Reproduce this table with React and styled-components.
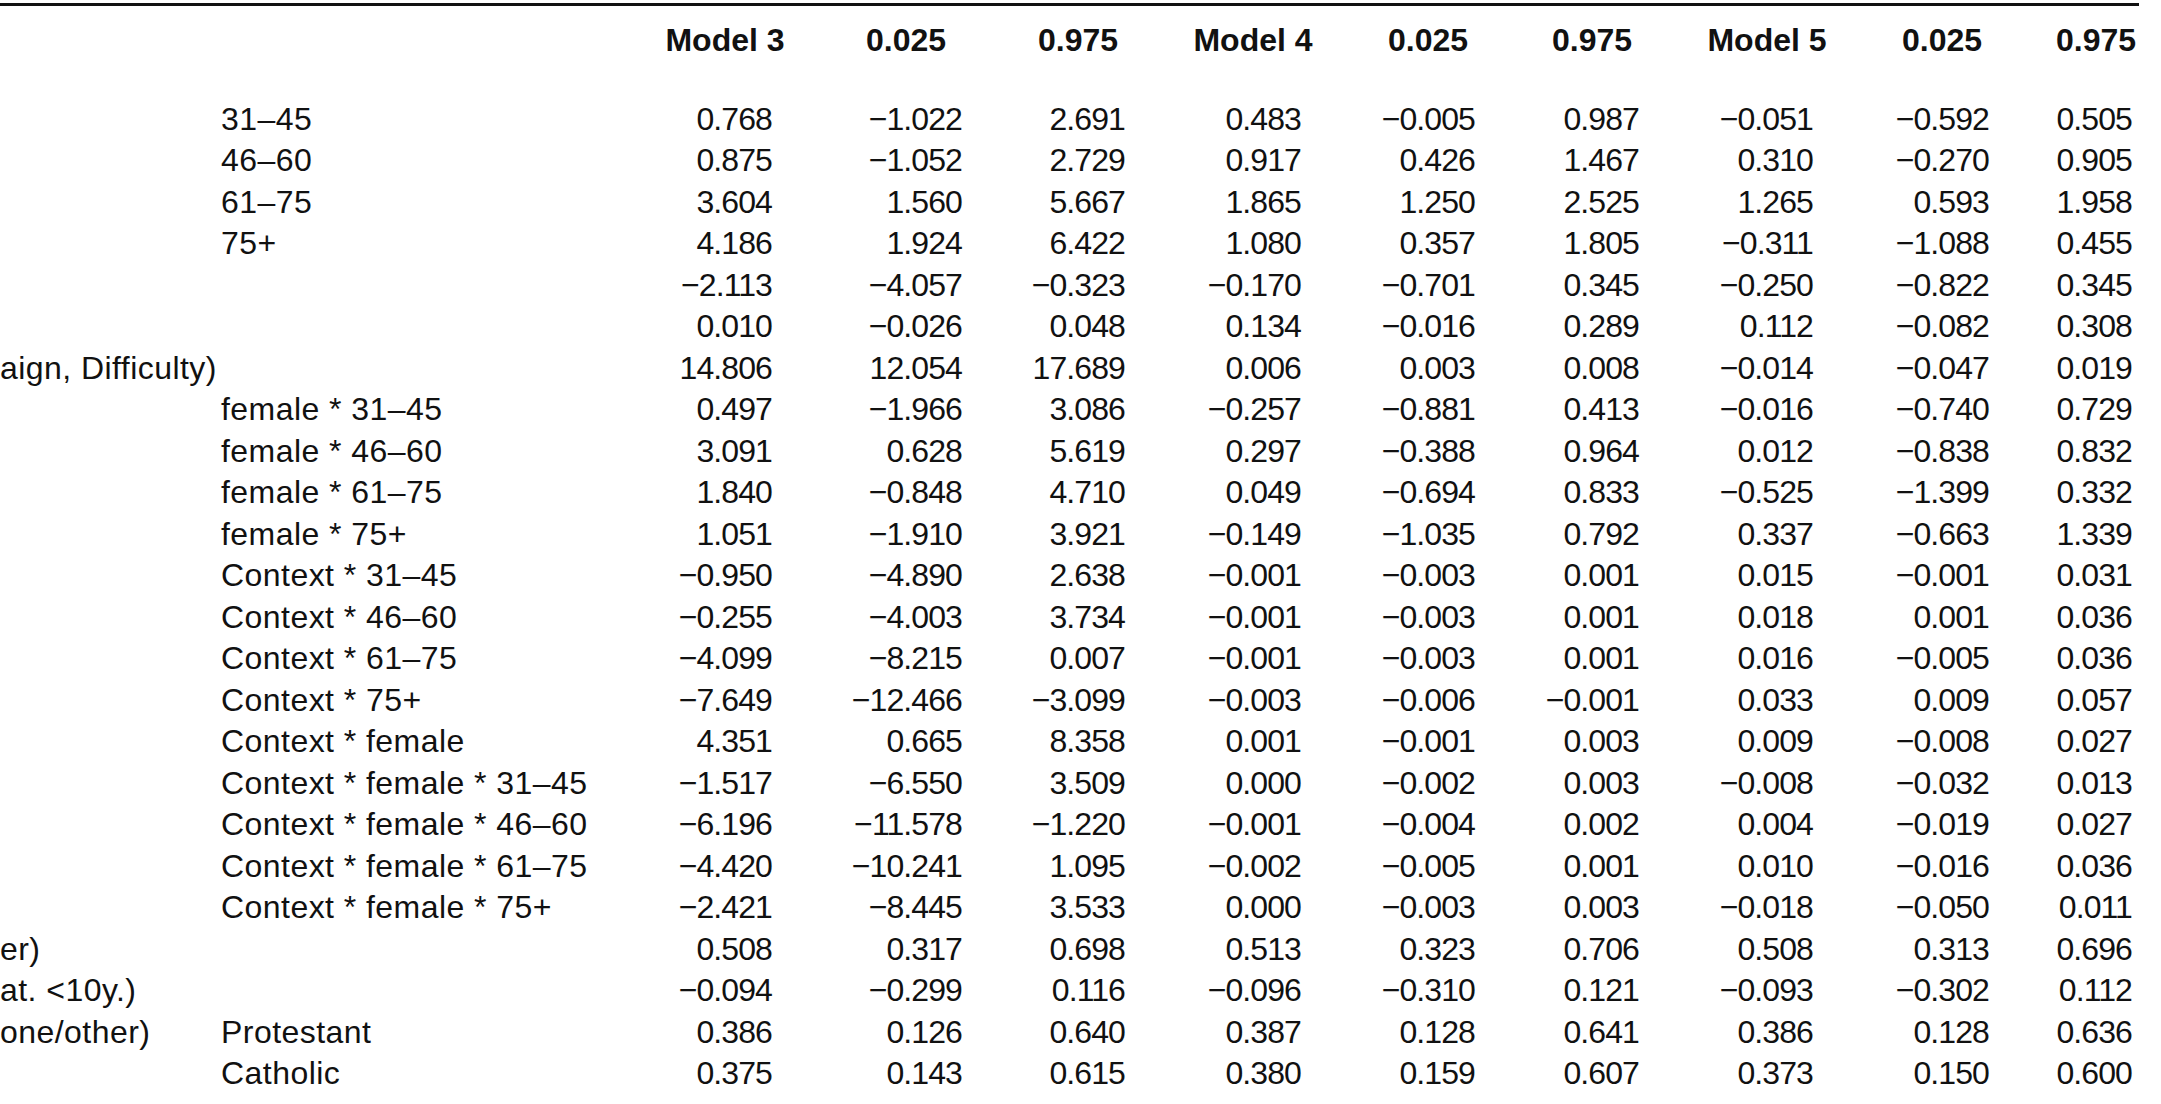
import React from "react";
import styled, { createGlobalStyle } from "styled-components";

const GlobalStyle = createGlobalStyle`
  html, body {
    margin: 0;
    padding: 0;
    background: #ffffff;
  }
  body {
    font-family: "Liberation Sans", Arial, sans-serif;
    color: #111111;
    overflow: hidden;
  }
`;

// widths of the grid tracks, the numeric ones end where the values end
const COLS = "221px 456px 96px 190px 163px 176px 174px 164px 174px 176px 143px";

const HEADERS = [
  { label: "Model 3", box: 96 },
  { label: "0.025", box: 114 },
  { label: "0.975", box: 96 },
  { label: "Model 4", box: 98 },
  { label: "0.025", box: 96 },
  { label: "0.975", box: 96 },
  { label: "Model 5", box: 94 },
  { label: "0.025", box: 96 },
  { label: "0.975", box: 74 },
];

const ROWS = [
  ["", "31–45", "0.768", "−1.022", "2.691", "0.483", "−0.005", "0.987", "−0.051", "−0.592", "0.505"],
  ["", "46–60", "0.875", "−1.052", "2.729", "0.917", "0.426", "1.467", "0.310", "−0.270", "0.905"],
  ["", "61–75", "3.604", "1.560", "5.667", "1.865", "1.250", "2.525", "1.265", "0.593", "1.958"],
  ["", "75+", "4.186", "1.924", "6.422", "1.080", "0.357", "1.805", "−0.311", "−1.088", "0.455"],
  ["", "", "−2.113", "−4.057", "−0.323", "−0.170", "−0.701", "0.345", "−0.250", "−0.822", "0.345"],
  ["", "", "0.010", "−0.026", "0.048", "0.134", "−0.016", "0.289", "0.112", "−0.082", "0.308"],
  ["aign, Difficulty)", "", "14.806", "12.054", "17.689", "0.006", "0.003", "0.008", "−0.014", "−0.047", "0.019"],
  ["", "female * 31–45", "0.497", "−1.966", "3.086", "−0.257", "−0.881", "0.413", "−0.016", "−0.740", "0.729"],
  ["", "female * 46–60", "3.091", "0.628", "5.619", "0.297", "−0.388", "0.964", "0.012", "−0.838", "0.832"],
  ["", "female * 61–75", "1.840", "−0.848", "4.710", "0.049", "−0.694", "0.833", "−0.525", "−1.399", "0.332"],
  ["", "female * 75+", "1.051", "−1.910", "3.921", "−0.149", "−1.035", "0.792", "0.337", "−0.663", "1.339"],
  ["", "Context * 31–45", "−0.950", "−4.890", "2.638", "−0.001", "−0.003", "0.001", "0.015", "−0.001", "0.031"],
  ["", "Context * 46–60", "−0.255", "−4.003", "3.734", "−0.001", "−0.003", "0.001", "0.018", "0.001", "0.036"],
  ["", "Context * 61–75", "−4.099", "−8.215", "0.007", "−0.001", "−0.003", "0.001", "0.016", "−0.005", "0.036"],
  ["", "Context * 75+", "−7.649", "−12.466", "−3.099", "−0.003", "−0.006", "−0.001", "0.033", "0.009", "0.057"],
  ["", "Context * female", "4.351", "0.665", "8.358", "0.001", "−0.001", "0.003", "0.009", "−0.008", "0.027"],
  ["", "Context * female * 31–45", "−1.517", "−6.550", "3.509", "0.000", "−0.002", "0.003", "−0.008", "−0.032", "0.013"],
  ["", "Context * female * 46–60", "−6.196", "−11.578", "−1.220", "−0.001", "−0.004", "0.002", "0.004", "−0.019", "0.027"],
  ["", "Context * female * 61–75", "−4.420", "−10.241", "1.095", "−0.002", "−0.005", "0.001", "0.010", "−0.016", "0.036"],
  ["", "Context * female * 75+", "−2.421", "−8.445", "3.533", "0.000", "−0.003", "0.003", "−0.018", "−0.050", "0.011"],
  ["er)", "", "0.508", "0.317", "0.698", "0.513", "0.323", "0.706", "0.508", "0.313", "0.696"],
  ["at. <10y.)", "", "−0.094", "−0.299", "0.116", "−0.096", "−0.310", "0.121", "−0.093", "−0.302", "0.112"],
  ["one/other)", "Protestant", "0.386", "0.126", "0.640", "0.387", "0.128", "0.641", "0.386", "0.128", "0.636"],
  ["", "Catholic", "0.375", "0.143", "0.615", "0.380", "0.159", "0.607", "0.373", "0.150", "0.600"],
];

const Table = styled.div`
  width: 2139px;
  margin-top: 3px;
  border-top: 3px solid #111111;
  font-size: 32px;
`;

const HeadRow = styled.div`
  display: grid;
  grid-template-columns: ${COLS};
  height: 92.5px;
  padding-top: 14px;
  box-sizing: border-box;
  line-height: 41px;
`;

const HeadCell = styled.div`
  display: flex;
  justify-content: flex-end;
`;

const HeadText = styled.span`
  width: ${(p) => p.$box}px;
  white-space: nowrap;
  font-weight: 700;
  display: flex;
  justify-content: center;
`;

const Row = styled.div`
  display: grid;
  grid-template-columns: ${COLS};
  height: 41.5px;
  line-height: 41.5px;
`;

const Label = styled.div`
  grid-column: ${(p) => (p.$wide ? "span 2" : "auto")};
  white-space: nowrap;
  letter-spacing: 0.45px;
`;

const Num = styled.div`
  text-align: right;
  white-space: nowrap;
  letter-spacing: -0.9px;
  padding-right: 1px;
`;

export default function App() {
  return (
    <>
      <GlobalStyle />
      <Table>
        <HeadRow>
          <div />
          <div />
          {HEADERS.map((h, i) => (
            <HeadCell key={i}>
              <HeadText $box={h.box}>{h.label}</HeadText>
            </HeadCell>
          ))}
        </HeadRow>
        {ROWS.map((r, i) => {
          const [first, second, ...nums] = r;
          const wide = !second;
          return (
            <Row key={i}>
              <Label $wide={wide}>{first}</Label>
              {!wide && <Label>{second}</Label>}
              {nums.map((n, j) => (
                <Num key={j}>{n}</Num>
              ))}
            </Row>
          );
        })}
      </Table>
    </>
  );
}
